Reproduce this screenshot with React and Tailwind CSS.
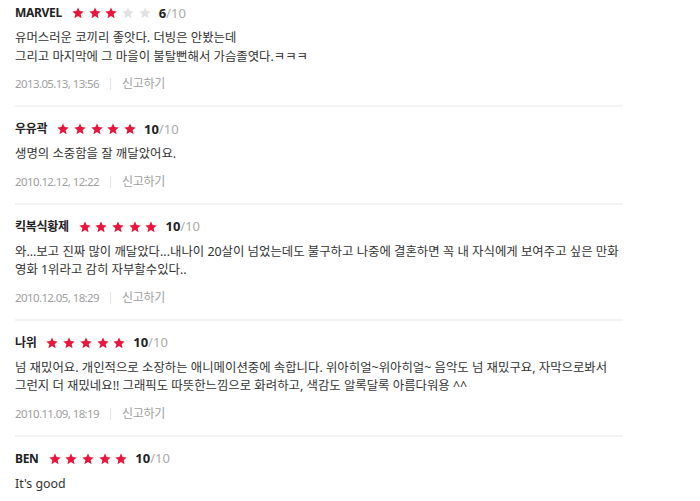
import React from "react";

const reviews = [
  {
    name: "MARVEL",
    stars: 3,
    score: 6,
    lines: ["유머스러운 코끼리 좋앗다. 더빙은 안봤는데", "그리고 마지막에 그 마을이 불탈뻔해서 가슴졸엿다.ㅋㅋㅋ"],
    date: "2013.05.13, 13:56",
  },
  {
    name: "우유곽",
    stars: 5,
    score: 10,
    lines: ["생명의 소중함을 잘 깨달았어요."],
    date: "2010.12.12, 12:22",
  },
  {
    name: "킥복식황제",
    stars: 5,
    score: 10,
    lines: [
      "와...보고 진짜 많이 깨달았다...내나이 20살이 넘었는데도 불구하고 나중에 결혼하면 꼭 내 자식에게 보여주고 싶은 만화",
      "영화 1위라고 감히 자부할수있다..",
    ],
    date: "2010.12.05, 18:29",
  },
  {
    name: "나위",
    stars: 5,
    score: 10,
    lines: [
      "넘 재밌어요. 개인적으로 소장하는 애니메이션중에 속합니다. 위아히얼~위아히얼~ 음악도 넘 재밌구요, 자막으로봐서",
      "그런지 더 재밌네요!! 그래픽도 따뜻한느낌으로 화려하고, 색감도 알록달록 아름다워용 ^^",
    ],
    date: "2010.11.09, 18:19",
  },
  {
    name: "BEN",
    stars: 5,
    score: 10,
    lines: ["It's good"],
    date: null,
  },
];

function Star({ on }) {
  return (
    <svg viewBox="0 0 24 24" className="w-[12px] h-[12px]" aria-hidden="true">
      <path
        d="M12 0.8l3.3 7.4 8 .8-6 5.4 1.8 7.9L12 18.2l-7.1 4.1 1.8-7.9-6-5.4 8-.8z"
        fill={on ? "#e8163c" : "#e2e2e2"}
      />
    </svg>
  );
}

export default function App() {
  return (
    <div
      className="bg-white w-[700px] h-[501px] overflow-hidden text-[#333]"
      style={{ fontFamily: '"Noto Sans", "Noto Sans CJK KR", sans-serif' }}
    >
      <ul className="ml-[15px] w-[608px]">
        {reviews.map((r, i) => (
          <li
            key={i}
            className={`${i === 0 ? "pt-[4px]" : "pt-[13px]"} pb-[12px] border-b-2 border-[#f3f3f3]`}
          >
            <div className="flex items-center h-[18px]">
              <span className="text-[12px] font-bold tracking-[-0.3px] text-[#222]">{r.name}</span>
              <span className="flex items-center gap-[4.7px] ml-[10px]">
                {[0, 1, 2, 3, 4].map((k) => (
                  <Star key={k} on={k < r.stars} />
                ))}
              </span>
              <span className="ml-[8px] text-[13px] leading-none">
                <b className="font-bold text-[#222]">{r.score}</b>
                <span className="text-[#aaa]">/10</span>
              </span>
            </div>
            <div className="mt-[7px] text-[12.4px] leading-[18.5px] text-[#333]">
              {r.lines.map((l, k) => (
                <p key={k} className="whitespace-nowrap">{l}</p>
              ))}
            </div>
            {r.date && (
              <div className="mt-[9px] flex items-center h-[18px] text-[#a0a0a0]">
                <span className="text-[11.5px] tracking-[-0.6px]">{r.date}</span>
                <span className="mx-[11px] w-px h-[12px] bg-[#e5e5e5]" />
                <span className="text-[12px] tracking-[-0.3px]">신고하기</span>
              </div>
            )}
          </li>
        ))}
      </ul>
    </div>
  );
}
